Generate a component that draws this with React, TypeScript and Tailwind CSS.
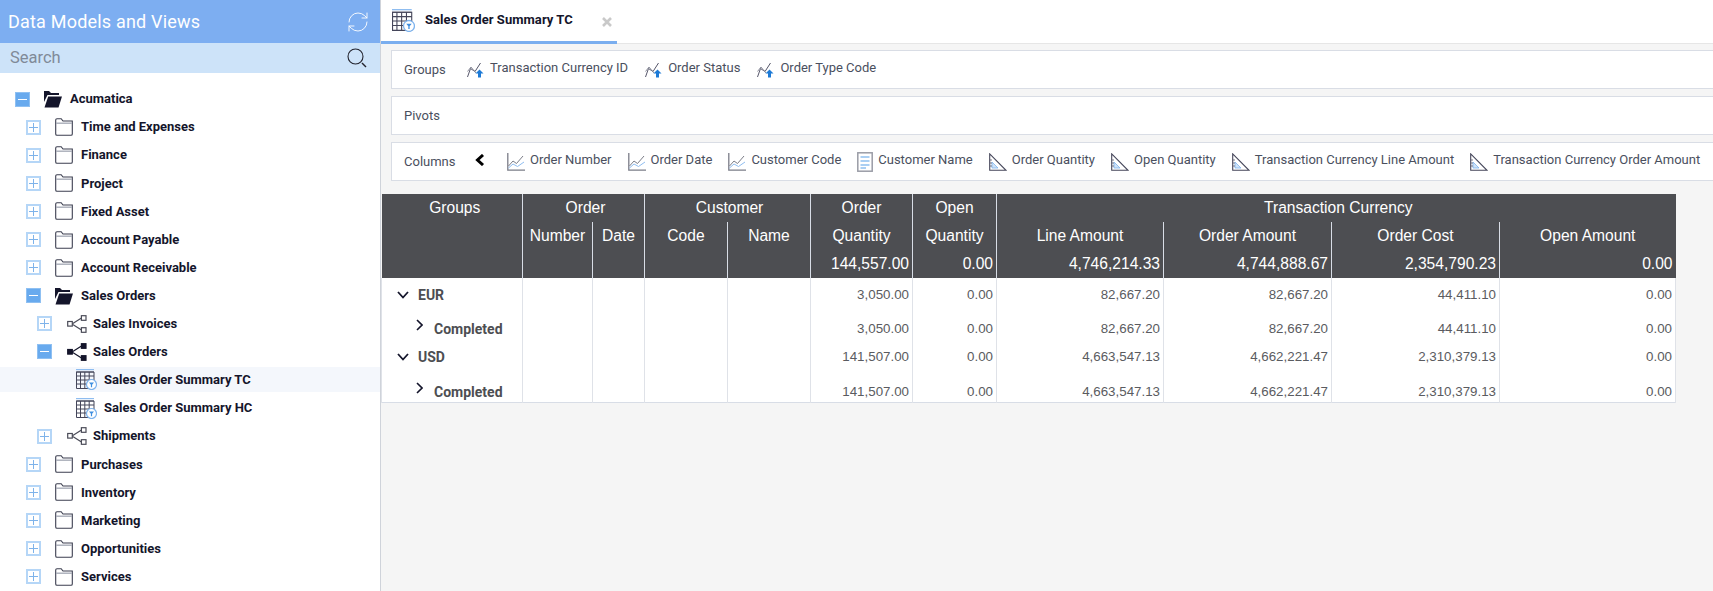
import { RefreshCw } from "lucide-react";

type IconKind = "closed" | "open" | "net" | "netOn" | "grid";

type TreeRow = {
  label: string;
  level: 0 | 1 | 2 | 3;
  toggle?: "plus" | "minus";
  icon: IconKind;
  active?: boolean;
};

const TREE: TreeRow[] = [
  { label: "Acumatica", level: 0, toggle: "minus", icon: "open" },
  { label: "Time and Expenses", level: 1, toggle: "plus", icon: "closed" },
  { label: "Finance", level: 1, toggle: "plus", icon: "closed" },
  { label: "Project", level: 1, toggle: "plus", icon: "closed" },
  { label: "Fixed Asset", level: 1, toggle: "plus", icon: "closed" },
  { label: "Account Payable", level: 1, toggle: "plus", icon: "closed" },
  { label: "Account Receivable", level: 1, toggle: "plus", icon: "closed" },
  { label: "Sales Orders", level: 1, toggle: "minus", icon: "open" },
  { label: "Sales Invoices", level: 2, toggle: "plus", icon: "net" },
  { label: "Sales Orders", level: 2, toggle: "minus", icon: "netOn" },
  { label: "Sales Order Summary TC", level: 3, icon: "grid", active: true },
  { label: "Sales Order Summary HC", level: 3, icon: "grid" },
  { label: "Shipments", level: 2, toggle: "plus", icon: "net" },
  { label: "Purchases", level: 1, toggle: "plus", icon: "closed" },
  { label: "Inventory", level: 1, toggle: "plus", icon: "closed" },
  { label: "Marketing", level: 1, toggle: "plus", icon: "closed" },
  { label: "Opportunities", level: 1, toggle: "plus", icon: "closed" },
  { label: "Services", level: 1, toggle: "plus", icon: "closed" },
];

const LEVEL_PAD = ["pl-[15px]", "pl-[26px]", "pl-[37px]", "pl-[76px]"];

const GROUP_ITEMS = ["Transaction Currency ID", "Order Status", "Order Type Code"];

const COLUMN_ITEMS: { label: string; icon: "line" | "doc" | "ruler" }[] = [
  { label: "Order Number", icon: "line" },
  { label: "Order Date", icon: "line" },
  { label: "Customer Code", icon: "line" },
  { label: "Customer Name", icon: "doc" },
  { label: "Order Quantity", icon: "ruler" },
  { label: "Open Quantity", icon: "ruler" },
  { label: "Transaction Currency Line Amount", icon: "ruler" },
  { label: "Transaction Currency Order Amount", icon: "ruler" },
];

const COL_WIDTHS = [141, 70, 52, 83, 83, 102, 84, 167, 168, 168, 176];

const DATA_ROWS = [
  { label: "EUR", depth: 0, height: "h-[34px]", pad: "", values: ["3,050.00", "0.00", "82,667.20", "82,667.20", "44,411.10", "0.00"] },
  { label: "Completed", depth: 1, height: "h-[34px]", pad: "", values: ["3,050.00", "0.00", "82,667.20", "82,667.20", "44,411.10", "0.00"] },
  { label: "USD", depth: 0, height: "h-[34px]", pad: "pb-3", values: ["141,507.00", "0.00", "4,663,547.13", "4,662,221.47", "2,310,379.13", "0.00"] },
  { label: "Completed", depth: 1, height: "h-[22px]", pad: "pt-[2px]", values: ["141,507.00", "0.00", "4,663,547.13", "4,662,221.47", "2,310,379.13", "0.00"] },
];

function FolderClosed() {
  return (
    <svg width="18" height="18" viewBox="0 0 18 18" fill="none" className="shrink-0">
      <path d="M.7 16V2Q.7 .7 2 .7H6.2L8 3H17.3V16Q17.3 17.3 16 17.3H2Q.7 17.3 .7 16Z" stroke="#3c3f50" strokeWidth="1.1" />
      <path d="M1 5.2H17" stroke="#a9adb8" strokeWidth="1.4" />
    </svg>
  );
}

function FolderOpen() {
  return (
    <svg width="19" height="18" viewBox="0 0 19 18" className="shrink-0">
      <path d="M1 1H6L8 3H16V5H4.5L1 12Z" fill="#14152b" />
      <path d="M5.2 6.5H19L15.5 17.5H1.5Z" fill="#14152b" />
    </svg>
  );
}

function NetworkIcon({ filled }: { filled?: boolean }) {
  const fill = filled ? "#14152b" : "#ffffff";
  const stroke = filled ? "#14152b" : "#4b4c58";
  return (
    <svg width="20" height="18" viewBox="0 0 20 18" fill="none" className="shrink-0">
      <path d="M5 9L14.5 3M5 9L14.5 15" stroke={stroke} strokeWidth="1.2" />
      <rect x=".7" y="6.5" width="4.6" height="4.6" fill={fill} stroke={stroke} strokeWidth="1.2" />
      <rect x="14.4" y=".7" width="4.6" height="4.6" fill={fill} stroke={stroke} strokeWidth="1.2" />
      <rect x="14.4" y="12.7" width="4.6" height="4.6" fill={fill} stroke={stroke} strokeWidth="1.2" />
    </svg>
  );
}

function GridFilterIcon({ size = 21 }: { size?: number }) {
  return (
    <svg width={size} height={size} viewBox="0 0 21 21" fill="none" className="shrink-0">
      <path d="M0 .6H18" stroke="#8fbdf0" strokeWidth="1.2" />
      <path d="M.5 3V19.5H18V3Z" stroke="#45465a" strokeWidth="1" />
      <path d="M0 3H18M0 7H18M0 11H18M0 15H18M4.5 3V19.5M8.8 3V19.5M13.2 3V19.5" stroke="#45465a" strokeWidth="1" />
      <circle cx="15.5" cy="15.5" r="5" fill="#ffffff" stroke="#7fb4ee" strokeWidth="1.2" />
      <path d="M13 13.4H18L16.1 15.8V18.3H14.9V15.8Z" fill="#3f8fe0" />
    </svg>
  );
}

function TrendArrowIcon() {
  return (
    <svg width="17" height="16" viewBox="0 0 17 16" fill="none" className="shrink-0">
      <path d="M.5 15L3.5 6.5L8 9.5L13.5 1" stroke="#55566a" strokeWidth="1" />
      <path d="M.5 9.5L4 5L9 11" stroke="#8d8f9c" strokeWidth="1" />
      <path d="M12.5 7.5L16.5 11.5H14V15.5H11V11.5H8.5Z" fill="#1d7ad6" />
    </svg>
  );
}

function LineChartIcon() {
  return (
    <svg width="18" height="18" viewBox="0 0 18 18" fill="none" className="shrink-0">
      <path d="M.8 0V17.2H18" stroke="#7b7d88" strokeWidth="1.3" />
      <path d="M1.5 13L6 8L9.5 10.5L16 3" stroke="#7b7d88" strokeWidth="1" />
      <path d="M1.5 15L6 11L10.5 13.5L17 9" stroke="#8fbdf0" strokeWidth="1" />
    </svg>
  );
}

function DocIcon() {
  return (
    <svg width="16" height="20" viewBox="0 0 16 20" fill="none" className="shrink-0">
      <rect x=".8" y=".8" width="14.4" height="18.4" stroke="#9a9ca6" strokeWidth="1.5" />
      <path d="M3.5 5H12.5M3.5 9H12.5M3.5 13H12.5M3.5 16H9" stroke="#8fc0ef" strokeWidth="1.6" />
    </svg>
  );
}

function RulerIcon() {
  return (
    <svg width="18" height="18" viewBox="0 0 18 18" fill="none" className="shrink-0">
      <path d="M.7 .9V17.3H17L.7 .9Z" stroke="#45465a" strokeWidth="1.1" />
      <path d="M3 9V15H9Z" fill="#cfe3f8" stroke="#7fb4ee" strokeWidth=".8" />
      <path d="M1 7H3M1 10H3M1 13H3" stroke="#45465a" strokeWidth=".7" />
    </svg>
  );
}

function ColumnIcon({ kind }: { kind: "line" | "doc" | "ruler" }) {
  if (kind === "doc") return <DocIcon />;
  if (kind === "ruler") return <RulerIcon />;
  return <LineChartIcon />;
}

function TreeIcon({ kind }: { kind: IconKind }) {
  if (kind === "closed") return <FolderClosed />;
  if (kind === "open") return <FolderOpen />;
  if (kind === "grid") return <GridFilterIcon />;
  return <NetworkIcon filled={kind === "netOn"} />;
}

function Toggle({ mode }: { mode: "plus" | "minus" }) {
  if (mode === "minus") {
    return (
      <span className="flex h-[15px] w-[15px] shrink-0 items-center justify-center border border-[#8fc0f2] bg-[#68aaee]">
        <span className="h-px w-[9px] bg-white" />
      </span>
    );
  }
  return (
    <span className="relative flex h-[15px] w-[15px] shrink-0 items-center justify-center border-2 border-[#b5d6f7] bg-white">
      <span className="h-px w-[9px] bg-[#7eb3ea]" />
      <span className="absolute h-[9px] w-px bg-[#7eb3ea]" />
    </span>
  );
}

function Sidebar() {
  return (
    <aside className="flex h-full w-[381px] shrink-0 flex-col border-r border-[#cfd3da] bg-white">
      <div className="flex h-[43px] items-center justify-between bg-[#7daef1] pr-[10px] pl-2">
        <span className="text-[18px] tracking-[0.2px] text-white">Data Models and Views</span>
        <RefreshCw size={24} strokeWidth={0.9} color="#ffffff" />
      </div>
      <div className="flex h-[30px] items-center justify-between bg-[#cde3f9] pr-[13px] pl-[10px]">
        <span className="text-[16.5px] text-[#808a98]">Search</span>
        <svg width="20" height="20" viewBox="0 0 20 20" fill="none">
          <circle cx="8.5" cy="8.5" r="7.5" stroke="#23242f" strokeWidth="1.1" />
          <path d="M15 15L19 19" stroke="#23242f" strokeWidth="1.5" />
        </svg>
      </div>
      <div className="flex-1 overflow-hidden pt-[12px]">
        {TREE.map((row, index) => (
          <div key={index} className="flex h-[28.1px] items-center">
            <div
              className={`flex h-[25px] w-full items-center ${LEVEL_PAD[row.level]} ${row.active ? "bg-[#f4f7fc]" : ""}`}
            >
              {row.toggle && <Toggle mode={row.toggle} />}
              {row.toggle && <span className={row.level === 2 ? "w-[15px]" : row.icon === "open" ? "w-[13px]" : "w-[14px]"} />}
              <TreeIcon kind={row.icon} />
              <span
                className={`text-[13px] font-bold whitespace-nowrap text-[#14152b] ${row.level === 3 ? "ml-[7px]" : row.level === 2 ? "ml-[6px]" : "ml-[8px]"}`}
              >
                {row.label}
              </span>
            </div>
          </div>
        ))}
      </div>
    </aside>
  );
}

function TabStrip() {
  return (
    <div className="flex h-[44px] bg-white">
      <div className="flex h-full w-[236px] items-center border-b-[3px] border-[#7aaeef] pl-[11px]">
        <GridFilterIcon size={23} />
        <span className="ml-[10px] -mt-[2px] text-[13px] font-bold tracking-[0.05px] whitespace-nowrap text-[#14152b]">
          Sales Order Summary TC
        </span>
        <svg width="10" height="10" viewBox="0 0 10 10" className="mt-[3px] ml-[29px]">
          <path d="M1 1L9 9M9 1L1 9" stroke="#c9c9c9" strokeWidth="2.6" />
        </svg>
      </div>
      <div className="flex-1 border-b border-[#e6e6e6]" />
    </div>
  );
}

function Band({ children }: { children: React.ReactNode }) {
  return (
    <div className="flex h-[39px] items-center border-y border-l border-[#d9dde5] bg-white pl-3 text-[13px] whitespace-nowrap text-[#4a4f5e]">
      {children}
    </div>
  );
}

function ReportTable() {
  return (
    <table className="w-[1295px] table-fixed border-collapse font-['Liberation_Sans',Arial,sans-serif]">
      <colgroup>
        {COL_WIDTHS.map((width, index) => (
          <col key={index} style={{ width }} />
        ))}
      </colgroup>
      <thead className="bg-[#4d4e52] text-[15.6px] font-normal text-white">
        <tr className="h-[28px]">
          <th className="border-r border-[#d8dde6] pl-[6px] font-normal">Groups</th>
          <th colSpan={2} className="border-r border-[#d8dde6] pl-1 font-normal">Order</th>
          <th colSpan={2} className="border-r border-[#d8dde6] pl-1 font-normal">Customer</th>
          <th className="border-r border-[#d8dde6] font-normal">Order</th>
          <th className="border-r border-[#d8dde6] font-normal">Open</th>
          <th colSpan={4} className="pl-1 font-normal">Transaction Currency</th>
        </tr>
        <tr className="h-[28px]">
          <th className="border-r border-[#d8dde6]" />
          {["Number", "Date", "Code", "Name", "Quantity", "Quantity", "Line Amount", "Order Amount", "Order Cost"].map((title, index) => (
            <th key={index} className="border-r border-[#d8dde6] font-normal">{title}</th>
          ))}
          <th className="font-normal">Open Amount</th>
        </tr>
        <tr className="h-[28px] text-right">
          <th className="border-r border-[#d8dde6]" />
          <th className="border-r border-[#d8dde6]" />
          <th className="border-r border-[#d8dde6]" />
          <th className="border-r border-[#d8dde6]" />
          <th className="border-r border-[#d8dde6]" />
          {["144,557.00", "0.00", "4,746,214.33", "4,744,888.67", "2,354,790.23"].map((total, index) => (
            <th key={index} className="border-r border-[#d8dde6] pr-[3px] font-normal">{total}</th>
          ))}
          <th className="pr-[3px] font-normal">0.00</th>
        </tr>
      </thead>
      <tbody className="bg-white text-[13.33px] text-[#5a5b60]">
        {DATA_ROWS.map((row, rowIndex) => (
          <tr key={rowIndex} className={row.height}>
            <td className={`border border-t-0 border-b-0 border-[#dfe2e8] ${row.pad}`}>
              <div
                className={`flex items-center font-['Roboto',sans-serif] text-[14px] leading-[18px] font-bold text-[#4d4e52] ${row.depth === 0 ? "pl-[15px]" : "pl-[34px]"}`}
              >
                {row.depth === 0 ? (
                  <svg width="12" height="8" viewBox="0 0 12 8" fill="none" className="mr-[9px]">
                    <path d="M1 1L6 6.5L11 1" stroke="#14152b" strokeWidth="1.8" />
                  </svg>
                ) : (
                  <svg width="7" height="12" viewBox="0 0 7 12" fill="none" className="mr-[11px] -mt-[8px]">
                    <path d="M1 1L6 6L1 11" stroke="#14152b" strokeWidth="1.6" />
                  </svg>
                )}
                {row.label}
              </div>
            </td>
            {[0, 1, 2, 3].map((cell) => (
              <td key={cell} className="border-r border-[#dfe2e8]" />
            ))}
            {row.values.map((value, index) => (
              <td key={index} className={`border-r border-[#dfe2e8] pr-[3px] text-right ${row.pad}`}>
                {value}
              </td>
            ))}
          </tr>
        ))}
        <tr className="h-0">
          <td colSpan={11} className="border-t border-[#d8dde6] p-0" />
        </tr>
      </tbody>
    </table>
  );
}

export default function App() {
  return (
    <div className="flex h-[591px] w-[1713px] overflow-hidden bg-white font-['Roboto',sans-serif]">
      <Sidebar />
      <main className="flex min-w-0 flex-1 flex-col overflow-hidden bg-[#f5f5f5]">
        <TabStrip />
        <div className="mt-[6px] flex flex-col gap-[7px] pl-[10px]">
          <Band>
            <span className="w-[63px] shrink-0">Groups</span>
            {GROUP_ITEMS.map((item) => (
              <span key={item} className="mr-[17px] flex items-center gap-[6px]">
                <TrendArrowIcon />
                <span className="-mt-[4px]">{item}</span>
              </span>
            ))}
          </Band>
          <Band>Pivots</Band>
          <Band>
            <span className="w-[71px] shrink-0">Columns</span>
            <svg width="10" height="12" viewBox="0 0 10 12" fill="none" className="mr-[22px] -mt-[4px] shrink-0">
              <path d="M8 1L2.5 6L8 11" stroke="#000000" strokeWidth="3" />
            </svg>
            {COLUMN_ITEMS.map((item) => (
              <span key={item.label} className="mr-[16px] flex items-center gap-[5px]">
                <ColumnIcon kind={item.icon} />
                <span className="-mt-[4px]">{item.label}</span>
              </span>
            ))}
          </Band>
        </div>
        <div className="mt-[13px]">
          <ReportTable />
        </div>
      </main>
    </div>
  );
}
